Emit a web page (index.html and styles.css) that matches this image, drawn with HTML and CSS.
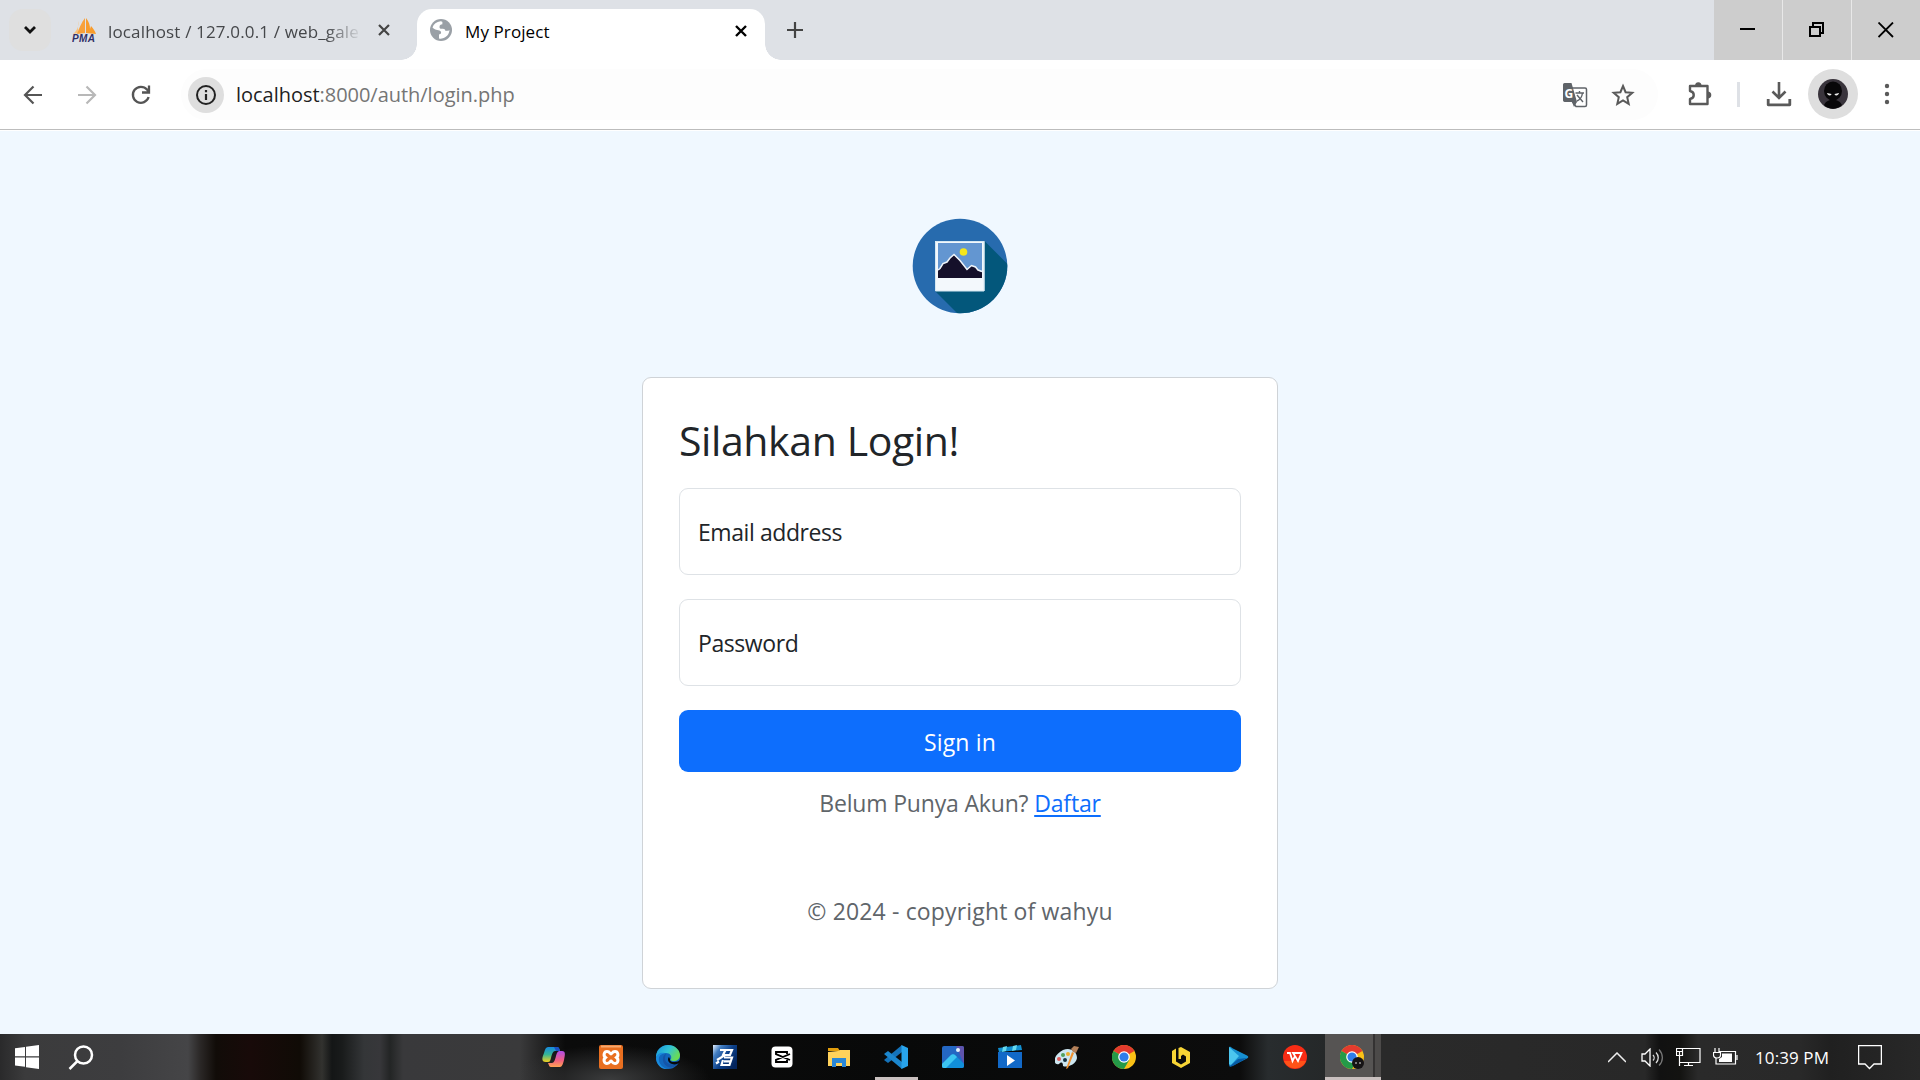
FILE: index.html
```html
<!DOCTYPE html>
<html lang="id">
<head>
<meta charset="utf-8">
<title>My Project</title>
<link rel="stylesheet" href="styles.css">
</head>
<body>
<div class="tabstrip">
  <button class="tab-search" aria-label="Search tabs"><svg width="14" height="10" viewBox="0 0 14 10"><path d="M2 2l5 5 5-5" fill="none" stroke="#111" stroke-width="2.8"/></svg></button>
  <div class="tab">
    <svg class="favicon" width="24" height="25" viewBox="0 0 24 25"><path d="M6 3C7 7 6 12 1 16l5-1z" fill="#f8c37d"/><path d="M13 0C10 4 7 10 5 16l8-1z" fill="#f9a13a"/><path d="M14 0v15l10 1c-1-3-3-6-5-8l-1 3c0-4-1-7-4-11z" fill="#f89c2c"/><text x="0" y="24" class="pma" textLength="23">PMA</text></svg>
    <span class="tab-title faded">localhost / 127.0.0.1 / web_gale</span>
    <svg class="tab-x" width="14" height="14" viewBox="0 0 14 14"><path d="M2 2l10 10M12 2L2 12" stroke="#444" stroke-width="2.2"/></svg>
  </div>
  <div class="tab tab-active">
    <svg class="favicon" width="22" height="22" viewBox="0 0 22 22"><circle cx="11" cy="11" r="11" fill="#9aa0a6"/><path d="M2.5 8.500C3.700 5 6.500 2.700 10.500 2.300c3 .2 1.500 1.500 2 3-2 .2-3 1-3 2.700 0 1.500 1 2 2.500 1.700 2.500-.3 3.500.8 3.500 2.300 1.800-.2 3.500-.3 4-1-.2 2.500-1.500 5.500-4 7-2.500 1.700-4.500 2-6.500 1.500v-4c2-.3 2.500-1.500 1.800-3-1-1.700-5.500-1-8.300-4z" fill="#fff"/></svg>
    <span class="tab-title">My Project</span>
    <svg class="tab-x" width="14" height="14" viewBox="0 0 14 14"><path d="M2 2l10 10M12 2L2 12" stroke="#000" stroke-width="2.4"/></svg>
  </div>
  <button class="new-tab" aria-label="New tab"><svg width="16" height="16" viewBox="0 0 16 16"><path d="M8 0v16M0 8h16" stroke="#444" stroke-width="2.2"/></svg></button>
  <div class="window-controls">
    <button aria-label="Minimize"><svg width="16" height="16" viewBox="0 0 16 16"><path d="M0 7h15" stroke="#000" stroke-width="2"/></svg></button>
    <button aria-label="Restore"><svg width="16" height="16" viewBox="0 0 16 16"><path d="M1 5h10v9H1zM4 5V1h10v10h-3" fill="none" stroke="#000" stroke-width="2"/></svg></button>
    <button aria-label="Close"><svg width="16" height="16" viewBox="0 0 16 16"><path d="M.5.500l14.500 14.500M15 .5L.5 15" stroke="#000" stroke-width="1.800"/></svg></button>
  </div>
</div>

<div class="toolbar">
  <div class="nav">
    <svg width="20" height="20" viewBox="0 0 20 20"><path d="M19 10H3M10.500 1.500L2 10l8.500 8.500" fill="none" stroke="#555" stroke-width="2.200"/></svg>
    <svg width="20" height="20" viewBox="0 0 20 20"><path d="M1 10h16M9.500 1.500L18 10l-8.500 8.500" fill="none" stroke="#b8b8b8" stroke-width="2.200"/></svg>
    <svg width="20" height="20" viewBox="0 0 20 20"><path d="M17.600 12A8 8 0 1 1 16 4.600L18 7M18 .5V7.500h-7" fill="none" stroke="#555" stroke-width="2.300"/></svg>
  </div>
  <div class="omnibox">
    <span class="site-info"><svg width="22" height="22" viewBox="0 0 22 22"><circle cx="11" cy="11" r="9" fill="none" stroke="#222" stroke-width="2"/><path d="M11 10v6M11 6v2.200" stroke="#222" stroke-width="2.200"/></svg></span>
    <span class="url"><b>localhost</b>:8000/auth/login.php</span>
    <svg class="translate" width="26" height="26" viewBox="0 0 26 26"><path d="M10 6h13a1.500 1.500 0 0 1 1.500 1.500V23a1.500 1.500 0 0 1-1.500 1.500H14L10 19" fill="#fff" stroke="#5f6368" stroke-width="1.500"/><path d="M2.500 1H9.500l5.500 19H2.500A1.800 1.800 0 0 1 1 18.500v-16A1.500 1.500 0 0 1 2.500 1zM10 20h5l-3 5z" fill="#5f6368"/><text x="2.500" y="15.500" class="gt">G</text><path d="M13.500 11H22M17.500 9v2M20.500 11c-.5 3.500-3 7-5.500 8M15 13l6 7" fill="none" stroke="#5f6368" stroke-width="1.400"/></svg>
    <svg class="star" width="24" height="24" viewBox="0 0 24 24"><path d="M12 3l2.600 6.200 6.700.6-5.100 4.400 1.500 6.600-5.700-3.500-5.700 3.500 1.500-6.600-5.100-4.400 6.700-.6z" fill="none" stroke="#5a5a5a" stroke-width="2"/></svg>
  </div>
  <div class="actions">
    <svg class="puzzle" width="26" height="26" viewBox="0 0 26 26"><path d="M3 5h17.500v18H3v-5c5-1 5-7 0-8z" fill="none" stroke="#5a5a5a" stroke-width="2.400" stroke-linejoin="round"/><path d="M8 5a3.300 3.800 0 0 1 6.600 0zM20.500 10.500a3.800 3.500 0 0 1 0 7z" fill="#5a5a5a"/></svg>
    <i class="divider"></i>
    <svg class="download" width="26" height="26" viewBox="0 0 26 26"><path d="M13 1v16M6.500 10.500L13 17l6.500-6.500" fill="none" stroke="#5a5a5a" stroke-width="2.600"/><path d="M2.200 18v5.800h21.600V18" fill="none" stroke="#5a5a5a" stroke-width="2.800" stroke-linejoin="round"/></svg>
    <span class="profile"><svg width="30" height="30" viewBox="0 0 30 30"><circle cx="15" cy="15" r="15" fill="#39343c"/><ellipse cx="15" cy="12" rx="9" ry="9.500" fill="#080709"/><path d="M6 26c2-4 5-4.500 6-5h6c1 .5 4 1 6 5-5 5-13 5-18 0z" fill="#080709"/><path d="M9 14l4.500 1c-.5 2.200-4 2-4.500-1zM21 14l-4.500 1c.5 2.200 4 2 4.500-1z" fill="#eee"/></svg></span>
    <svg width="6" height="22" viewBox="0 0 6 22"><g fill="#5a5a5a"><circle cx="3" cy="3" r="2.200"/><circle cx="3" cy="11" r="2.200"/><circle cx="3" cy="19" r="2.200"/></g></svg>
  </div>
</div>

<main class="page">
  <svg class="logo" width="96" height="96" viewBox="0 0 96 96">
    <defs><clipPath id="disc"><circle cx="48" cy="48" r="47.300"/></clipPath></defs>
    <g clip-path="url(#disc)"><path d="M0 0h96v96H0z" fill="#276bae"/><path d="M72.500 23l40 40v50H63L23 73z" fill="#03577b"/></g>
    <path d="M23 23h49.500v50H23z" fill="#f3f8fc"/><path d="M23.500 23.500h48.500v49.500H23.500z" fill="none" stroke="#d5e8f3"/>
    <path d="M26 25h44v35H26z" fill="#6396d1"/><circle cx="51.500" cy="34" r="3.800" fill="#f4e61b"/>
    <path d="M26 52.500l2-1.500 3-5 4-1.500 3-4 4-3.500 6 6 7 9 4.500-4 4 1.500 2.500 3 4 1.500V60H26z" fill="#15102a"/>
    <path d="M26 52l2-1.500 3-5 4-1.500 3-4 4-3.500 6 6 7 9 4.500-4 4 1.500 2.500 3 4 1.500" fill="none" stroke="#eef3f8" stroke-width="1.500"/>
  </svg>
  <form class="card">
    <h1>Silahkan Login!</h1>
    <div class="field"><label>Email address</label></div>
    <div class="field"><label>Password</label></div>
    <button class="signin" type="button">Sign in</button>
    <p class="register">Belum Punya Akun? <a href="#">Daftar</a></p>
    <p class="copyright">© 2024 - copyright of wahyu</p>
  </form>
</main>

<footer class="taskbar">
  <div class="start">
    <svg width="24" height="24" viewBox="0 0 24 24"><path d="M0 3.200L10 2v9.300H0zM11 1.800L24 0v11.300H11zM0 12.400h10v9.300L0 20.500zM11 12.400h13V24l-13-1.800z" fill="#fff"/></svg>
    <svg width="26" height="26" viewBox="0 0 26 26"><circle cx="15.500" cy="10" r="8.500" fill="none" stroke="#fff" stroke-width="2.500"/><path d="M9.500 16L1.500 24" stroke="#fff" stroke-width="2.500"/></svg>
  </div>
  <div class="apps">
    <span><svg width="24" height="24" viewBox="0 0 24 24"><defs><linearGradient id="cp1" x2="0" y2="1"><stop stop-color="#1689e0"/><stop offset=".5" stop-color="#36b595"/><stop offset="1" stop-color="#f3d01e"/></linearGradient><linearGradient id="cp2" x2="0" y2="1"><stop stop-color="#b04de8"/><stop offset=".6" stop-color="#f2607e"/><stop offset="1" stop-color="#ffa453"/></linearGradient></defs><path d="M6 2h9c2 0 2 1 3 4h-5c-2 0-3 3-4 7-1 3-1 4-3 4H4c-5 0-4-4-2-9 1-4 2-6 4-6z" fill="url(#cp1)"/><path d="M18 22H9c-2 0-2-2-3-4h4c2 0 3-3 4-7 1-4 2-5 4-5h2c4 0 3 4 2 9-1 4-2 7-4 7z" fill="url(#cp2)"/><path d="M12 2h3c2 0 2 1 3 4h-4z" fill="#1b50c4"/></svg></span>
    <span><svg width="24" height="24" viewBox="0 0 24 24"><rect width="24" height="24" rx="2" fill="#e96f20"/><path d="M2 1.500h20" stroke="#f7a86d" stroke-width="2"/><path d="M8 6.500c3 0 3 2.500 4 2.500s1-2.500 4-2.500 4 4 1.500 6c2.500 2 1.500 6-1.500 6s-3-2.500-4-2.500-1 2.500-4 2.500-4-4-1.500-6C4 10.500 5 6.500 8 6.500z" fill="none" stroke="#fff" stroke-width="3"/></svg></span>
    <span><svg width="24" height="24" viewBox="0 0 24 24"><defs><linearGradient id="ed" x2="1" y2=".5"><stop stop-color="#1791dd"/><stop offset=".55" stop-color="#32c4d4"/><stop offset="1" stop-color="#69db55"/></linearGradient></defs><circle cx="12" cy="12" r="12" fill="#1267bd"/><path d="M0 11C1 4 6 0 12 0c7 0 12 5 12 10 0 4-3 6-6 6-4 0-4-1-3-2 1-3-1-6-5-6-5 0-8 2-10 4z" fill="url(#ed)"/><path d="M9 8C4 9 2 12 3 16c1 4 4 7 9 8-7 1-12-5-12-11 1-5 5-6 9-5z" fill="#198bdd"/><path d="M10 9c-2 4-1 9 4 10 3 1 6 0 9-2-1 2-3 4-5 5-6 2-12-3-11-9 0-2 2-4 3-4z" fill="#1455a8"/><path d="M14 14c0 1 0 3 4 3 3 0 5-1 6-2v2c-2 2-5 3-8 2-4-1-5-5-3-7z" fill="#070a0d"/></svg></span>
    <span><svg width="24" height="24" viewBox="0 0 24 24"><defs><linearGradient id="bz" x2="1" y2=".7"><stop stop-color="#e4effd"/><stop offset=".25" stop-color="#437ec2"/><stop offset=".6" stop-color="#0c3f88"/><stop offset="1" stop-color="#04255c"/></linearGradient></defs><path d="M0 0h24v24H0z" fill="url(#bz)"/><path d="M7 5h12l-2 5h-5l-8 5M12.500 5L9.500 11M3 18.500l3-2M11 12.500h8l-2.500 7.500H8.500l1.500-5M11 16.300h6" fill="none" stroke="#fff" stroke-width="2.200"/></svg></span>
    <span><svg width="24" height="24" viewBox="0 0 24 24"><rect x="1.500" y="1.500" width="21" height="21" rx="4" fill="#fff"/><path d="M17 9V7H6v2l14 6M17 15v2H6v-2l14-6" fill="none" stroke="#000" stroke-width="1.900"/></svg></span>
    <span><svg width="24" height="24" viewBox="0 0 24 24"><path d="M1 3h10l2 3H1z" fill="#e19d0c"/><path d="M1 7l10-1 2-1h10v16H1z" fill="#ffd25b"/><path d="M5 22v-9h14v9h-4v-4H9v4z" fill="#2a87d6"/></svg></span>
    <span class="running"><svg width="24" height="24" viewBox="0 0 24 24"><path d="M18 0v7L4 18l-4-3z" fill="#1473ba"/><path d="M18 24v-7L4 6 0 9z" fill="#1b86cd"/><path d="M17.500 0L24 3v18l-6.500 3z" fill="#28a4ec"/></svg></span>
    <span><svg width="24" height="24" viewBox="0 0 24 24"><rect x="1" y="1" width="22" height="22" rx="2" fill="#2467c3"/><path d="M15 1h6a2 2 0 0 1 2 2v16z" fill="#5f54ad"/><path d="M1 19l9-9c1-1 3-1 4 0l9 9v2a2 2 0 0 1-2 2H3a2 2 0 0 1-2-2z" fill="#118fda"/><path d="M1 19l9-9c1-1 3-1 4 0l2 2L5 23H3a2 2 0 0 1-2-2z" fill="#3cc5f2"/><circle cx="17" cy="5" r="2" fill="#e5f3fc"/></svg></span>
    <span><svg width="24" height="24" viewBox="0 0 24 24"><path d="M0 7h24v16H0z" fill="#1269c8"/><path d="M0 3l23-3 1 5L1 7z" fill="#118fd0"/><path d="M5 2l4-1-1 5-4 1zM15 1l4-1-1 5-4 1z" fill="#66d9ef"/><path d="M9 10l8 5.500L9 21z" fill="#fff"/></svg></span>
    <span><svg width="24" height="24" viewBox="0 0 24 24"><path d="M8 5c7-3 14 1 14 8-1 7-11 10-14 8 0-3-1-5-4-2-4 1-5-2-4-6 1-3 4-6 8-8z" fill="#cce6f0"/><circle cx="4" cy="14" r="2" fill="#df5c5b"/><circle cx="8" cy="10" r="2" fill="#52a15c"/><circle cx="13" cy="9" r="2" fill="#ecaf2d"/><circle cx="10" cy="15" r="2" fill="#163342"/><path d="M19 8l-6 15-2 1 1-3 5-14z" fill="#f0912f"/><path d="M16 4l3-3 5 1-3 6-3-1z" fill="#b38059"/></svg></span>
    <span><svg width="24" height="24" viewBox="0 0 24 24"><circle cx="12" cy="12" r="12" fill="#fbc116"/><path d="M12 12L1.600 6A12 12 0 0 1 22.400 6z" fill="#e33b2e"/><path d="M1.600 6A12 12 0 0 0 12 24l5.200-9L12 12z" fill="#249a48"/><circle cx="12" cy="12" r="5.800" fill="#fff"/><circle cx="12" cy="12" r="4.600" fill="#2f7de9"/></svg></span>
    <span><svg width="24" height="24" viewBox="0 0 24 24"><path d="M3 6l4-2.500v13l5 3 5-3v-5l-3-2-2 1.500v3H9.500V3l2.500-1 9 5v11l-9 5-9-5z" fill="#f8d535"/></svg></span>
    <span><svg width="24" height="24" viewBox="0 0 24 24"><path d="M3 3c0-2 2-1 3 0l14 7c3 1 3 3 0 4L6 21c-2 1-3 0-3-2z" fill="#168fd1"/><path d="M3 2l10 9-8 9-2-1z" fill="#4cc6ef"/><path d="M3 22l9-8 9-1-14 8z" fill="#075ba4"/></svg></span>
    <span><svg width="24" height="24" viewBox="0 0 24 24"><circle cx="12" cy="12" r="12" fill="#f82c15"/><path d="M1 16a12 12 0 0 0 22 0z" fill="#ff5218"/><path d="M4 8h3l2.500 8 2.500-5 3 5 3.500-8H10l2 3" fill="none" stroke="#fff" stroke-width="1.800"/></svg></span>
    <span class="current"><svg width="24" height="24" viewBox="0 0 24 24"><circle cx="12" cy="12" r="12" fill="#fbc116"/><path d="M12 12L1.600 6A12 12 0 0 1 22.400 6z" fill="#e33b2e"/><path d="M1.600 6A12 12 0 0 0 12 24l5.200-9L12 12z" fill="#249a48"/><circle cx="12" cy="12" r="5.800" fill="#fff"/><circle cx="12" cy="12" r="4.600" fill="#2f7de9"/><circle cx="18" cy="18" r="6" fill="#151315"/><path d="M15 18h2M19 18h2" stroke="#ddd"/></svg></span>
  </div>
  <div class="tray">
    <svg width="18" height="11" viewBox="0 0 18 11"><path d="M0 10l9-9 9 9" fill="none" stroke="#eee" stroke-width="1.500"/></svg>
    <svg width="23" height="19" viewBox="0 0 23 19"><path d="M1 6h3l5-5v17l-5-5H1z" fill="none" stroke="#fff" stroke-width="1.300"/><path d="M12 7c1.500 1.500 1.500 4 0 5.500M15 4.500c3 3 3 7.500 0 10.500" fill="none" stroke="#ddd" stroke-width="1.300"/><path d="M18 1.500c4.500 5 4.500 11.500 0 16" fill="none" stroke="#777" stroke-width="1.300"/></svg>
    <svg width="25" height="19" viewBox="0 0 25 19"><path d="M7 .5h17v14H4M.5.500h6v7H.5zM0 3.500h6M3.500 4v14M8 17.500h9M12.500 15v2.500" fill="none" stroke="#fff" stroke-width="1.200"/></svg>
    <svg width="25" height="18" viewBox="0 0 25 18"><path d="M6 3.500h16.500v12.500H3V10M24 7v5" fill="none" stroke="#fff" stroke-width="1.200"/><path d="M9 5.500h10v8.500H6V11l3-2z" fill="#fff"/><path d="M2 0v4M6 0v4M.5 4.500h7V7c0 4-7 4-7 0z" fill="none" stroke="#fff" stroke-width="1.200"/></svg>
    <time>10:39 PM</time>
    <svg width="24" height="25" viewBox="0 0 24 25"><path d="M.600.700h22.800v18.300H16l-4.500 4.500L7 19H.6z" fill="none" stroke="#fff" stroke-width="1.300"/></svg>
  </div>
</footer>
</body>
</html>
```
FILE: styles.css
```css
* { box-sizing: border-box; }
body {
  margin: 0;
  width: 1920px;
  height: 1080px;
  overflow: hidden;
  display: flex;
  flex-direction: column;
  font-family: "Open Sans", "Noto Sans", sans-serif;
  color: #212529;
  background: #fff;
}
svg { display: block; flex: none; }
button { border: 0; padding: 0; background: none; font: inherit; }
h1, p { margin: 0; font-weight: 400; }

/* Tab strip */
.tabstrip { height: 60px; flex: none; display: flex; background: #dee1e6; }
.tab-search {
  width: 42px; height: 42px; margin: 9px 0 0 9px;
  display: grid; place-items: center;
  border-radius: 14px; background: #dfdfdf;
}
.tab { width: 366px; display: flex; align-items: flex-start; padding: 18px 26px 0 21px; }
.tab-title { flex: 1; font-size: 17px; line-height: 26px; white-space: nowrap; color: #45474a; }
.favicon + .tab-title { margin-left: 13px; }
.tab .faded {
  flex: none; width: 270px; margin: 1px -20px 0 12px; letter-spacing: .15px;
  -webkit-mask-image: linear-gradient(90deg, #000 218px, transparent 254px);
  mask-image: linear-gradient(90deg, #000 218px, transparent 254px);
}
.tab-x { margin-top: 5px; margin-left: auto; }
.tab-active {
  position: relative; width: 348px; height: 51px; margin-top: 9px;
  padding: 10px 17px 0 13px;
  border-radius: 15px 15px 0 0; background: #fff;
}
.tab-active .tab-title { color: #000; letter-spacing: .1px; }
.tab-active::before, .tab-active::after {
  content: ""; position: absolute; bottom: 0; width: 16px; height: 16px;
}
.tab-active::before { left: -16px; background: radial-gradient(circle at 0 0, transparent 15.500px, #fff 16px); }
.tab-active::after { right: -16px; background: radial-gradient(circle at 100% 0, transparent 15.500px, #fff 16px); }
.pma { font: italic 700 10px "Liberation Sans", sans-serif; fill: #2f2f66; }
.gt { font: 700 12px "Open Sans", sans-serif; fill: #fff; }
.new-tab { margin-left: 22px; padding-top: 22px; align-self: flex-start; }
.window-controls { margin-left: auto; display: flex; gap: 1px; background: #e8e8e8; }
.window-controls button { width: 68px; display: grid; place-items: center; background: #cdcdcd; }

/* Address bar */
.toolbar { height: 70px; flex: none; display: flex; align-items: center; padding-bottom: 9px; border-bottom: 1px solid #bdbdbd; }
.nav { display: flex; gap: 34px; width: 181px; margin-top: 10px; padding-left: 23px; }
.omnibox { width: 1477px; height: 51px; margin-top: 9px; display: flex; align-items: center; padding: 0 23px 0 7px; border-radius: 26px; background: #fdfdfd; }
.site-info { width: 36px; height: 36px; display: grid; place-items: center; border-radius: 50%; background: #dedede; }
.url { flex: 1; margin-left: 12px; font-size: 20px; line-height: 30px; letter-spacing: -.03px; color: #757575; }
.url b { font-weight: 400; color: #1f1f1f; }
.translate { margin-right: 23px; }
.actions { flex: 1; display: flex; align-items: center; margin-top: 8px; padding-left: 29px; }
.divider { width: 3px; height: 25px; margin: 0 26px 0 24px; background: #dee1e6; }
.profile { width: 50px; height: 50px; margin: 0 26px 0 16px; display: grid; place-items: center; border-radius: 50%; background: #dedede; }

/* Login page */
.page { height: 904px; flex: none; display: flex; flex-direction: column; align-items: center; padding-top: 87px; background: #f0f8ff; border-top: 1px solid #fff; }
.card { width: 636px; height: 612px; margin-top: 63px; padding: 37px 36px 0; display: flex; flex-direction: column; border: 1px solid #cfd3d7; border-radius: 9px; background: #fff; }
h1 { font-size: 41px; line-height: 50px; letter-spacing: -.4px; }
.field { height: 87px; flex: none; margin-bottom: 24px; padding: 0 18px; display: flex; align-items: center; border: 1px solid #dee2e6; border-radius: 9px; font-size: 23px; letter-spacing: -.42px; }
h1 + .field { margin-top: 23px; }
.signin { height: 62px; flex: none; padding-top: 2px; border-radius: 9px; background: #0d6efd; color: #fff; font-size: 23px; letter-spacing: .15px; }
.register, .copyright { font-size: 23px; line-height: 36px; text-align: center; color: #60656a; }
.register { margin-top: 13px; letter-spacing: -.17px; }
.register a { color: #0d6efd; text-underline-offset: 3px; }
.copyright { margin-top: 72px; letter-spacing: .15px; }

/* Taskbar */
.taskbar {
  height: 46px; flex: none; display: flex; color: #fff;
  background:
    radial-gradient(ellipse 100px 35px at 610px 46px, #3b3c3d 0, transparent 100%),
    linear-gradient(90deg, #2a2a2b 0, #3b3b3c 25px, #3d3d3f 120px, #454547 188px, #2b2827 200px, #110c08 216px, #180a09 250px, #100b06 300px, #32322f 322px, #141616 332px, #191b1b 342px, #343638 364px, #37373a 380px, #232525 390px, #39393b 403px, #3a3a3b 520px, #0b0b0b 565px, #080909 900px, #0c0c0c 1240px, #282c2e 1268px, #252829 1325px, #2a2a2a 1380px, #282828 1645px, #111 1660px, #131311 1680px, #2a2a2a 1698px, #292929 1800px, #202020 1830px, #282828 1920px);
}
.start { width: 524px; display: flex; gap: 29px; padding: 11px 0 0 15px; }
.apps { display: flex; }
.apps span { width: 57px; display: flex; justify-content: center; padding: 11px 0 0 3px; }
.apps span:not(.current) svg { margin-left: -1px; }
.apps .running { background: linear-gradient(#c9c0bf, #c9c0bf) 9px 43px / 43px 3px no-repeat; }
.apps .current {
  width: 56px; margin-left: 3px; padding: 11px 2px 0 0;
  background:
    linear-gradient(#c9c0bf, #c9c0bf) 0 43px / 100% 3px no-repeat,
    linear-gradient(90deg, #565453 0 48px, #343232 48px 50px, #4c4a49 50px);
}
.tray { margin-left: auto; display: flex; align-items: center; padding-right: 38px; }
.tray svg { margin-right: 12px; }
.tray svg:first-child { margin-right: 15px; }
.tray time { width: 74px; margin: 0 29px 0 5px; font-size: 17px; letter-spacing: .1px; white-space: nowrap; }
.tray time + svg { margin: 0; }
```
